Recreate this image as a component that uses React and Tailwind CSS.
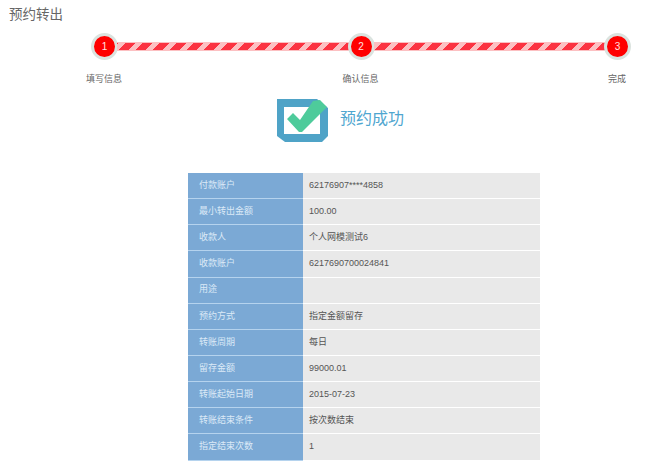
import React from 'react';

const rows = [
  ['付款账户', '62176907****4858'],
  ['最小转出金额', '100.00'],
  ['收款人', '个人网模测试6'],
  ['收款账户', '6217690700024841'],
  ['用途', ''],
  ['预约方式', '指定金额留存'],
  ['转账周期', '每日'],
  ['留存金额', '99000.01'],
  ['转账起始日期', '2015-07-23'],
  ['转账结束条件', '按次数结束'],
  ['指定结束次数', '1'],
];

const steps = ['填写信息', '确认信息', '完成'];

function StepDot({ n }) {
  return (
    <div className="w-[27px] h-[27px] shrink-0 rounded-full bg-[#f00] border-[3px] border-[#dbe3df] flex items-center justify-center text-[#ffe0e0] text-[10px]">
      {n}
    </div>
  );
}

function StepBar() {
  return (
    <div className="flex-1 h-[9px] -mx-[1px] flex items-center bg-[#fcc0c2]">
      <div className="w-full h-[7px] bg-[repeating-linear-gradient(-45deg,#fb3341_0,#fb3341_7px,transparent_7px,transparent_12px)]" />
    </div>
  );
}

function SuccessIcon() {
  return (
    <svg width="53" height="44" viewBox="0 0 53 44">
      <path d="M1 0H41L52 9V37L46 43H9L1 37Z" fill="#4fa3c7" />
      <path d="M8 8H38L44 13V35H8Z" fill="#fff" />
      <path d="M11 20L17 14L24 21L37 2L44 1L51 8L26 33H23Z" fill="#4ecb9b" />
    </svg>
  );
}

export default function App() {
  return (
    <div className="w-[650px] h-[468px] overflow-hidden bg-white text-[#555] font-['Liberation_Sans','Noto_Sans_CJK_SC',sans-serif]">
      <h1 className="pl-[9px] pt-[6px] h-[33px] text-[13.5px] leading-[18px] font-normal text-[#666]">预约转出</h1>

      <div className="ml-[91px] w-[540px] flex items-center">
        <StepDot n={1} />
        <StepBar />
        <StepDot n={2} />
        <StepBar />
        <StepDot n={3} />
      </div>

      <div className="ml-[74px] w-[573px] mt-[12px] flex justify-between text-[9px] leading-[14px] text-[#666]">
        {steps.map((s) => (
          <span key={s} className="w-[60px] text-center">{s}</span>
        ))}
      </div>

      <div className="mt-[13px] ml-[276px] flex items-start gap-[11px]">
        <SuccessIcon />
        <span className="mt-[9px] text-[16px] leading-[22px] text-[#4fa6d0]">预约成功</span>
      </div>

      <div className="mt-[30px] ml-[188px] w-[352px] flex flex-col">
        {rows.map(([label, value]) => (
          <div key={label} className="flex h-[26.15px] text-[9px]">
            <div className="w-[115px] pl-[11px] flex items-center bg-[#7ba9d5] border-b border-[#b5d3ee] text-[#dce9f7]">{label}</div>
            <div className="flex-1 pl-[6px] flex items-center bg-[#e9e9e9] border-b border-white text-[#555]">{value}</div>
          </div>
        ))}
      </div>
    </div>
  );
}
